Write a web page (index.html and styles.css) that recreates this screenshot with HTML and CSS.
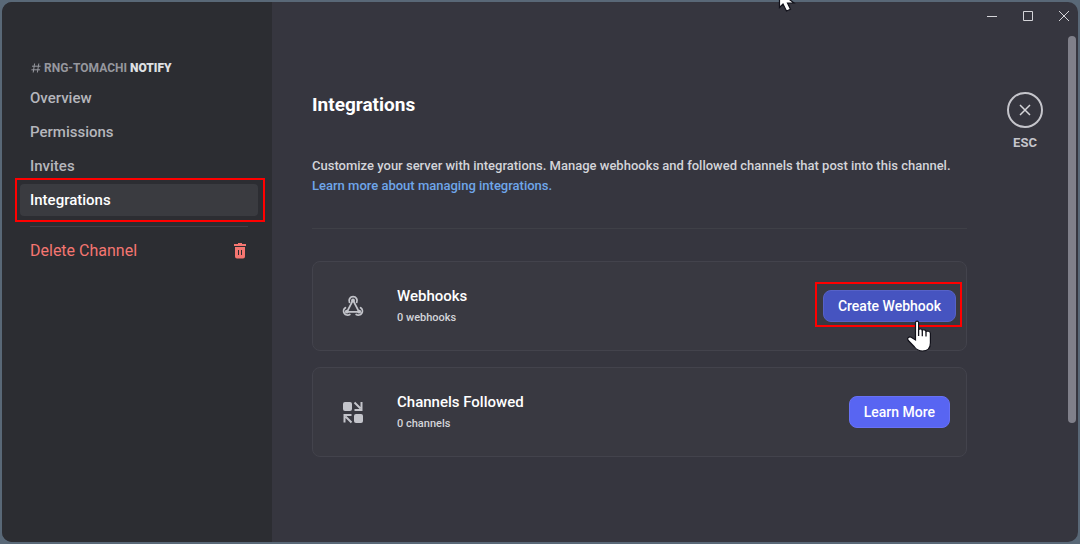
FILE: index.html
```html
<!DOCTYPE html>
<html lang="en">
<head>
<meta charset="utf-8">
<meta name="viewport" content="width=device-width, initial-scale=1">
<title>Integrations</title>
<link rel="stylesheet" href="styles.css">
</head>
<body>
<div class="window">
  <aside class="sidebar">
    <h2 class="channel">
      <svg class="hash" viewBox="0 0 10 10" width="10" height="10" aria-hidden="true"><path d="M3.6 0.5 2.2 9.5M7.8 0.5 6.4 9.5M1 3.2h8.6M0.4 6.8H9"/></svg>
      <span>RNG-TOMACHI <b>NOTIFY</b></span>
    </h2>
    <nav class="nav">
      <a class="nav-item" href="#overview">Overview</a>
      <a class="nav-item" href="#permissions">Permissions</a>
      <a class="nav-item" href="#invites">Invites</a>
      <a class="nav-item active marked" href="#integrations" aria-current="page">Integrations</a>
    </nav>
    <hr class="nav-rule">
    <button class="nav-item delete" type="button">Delete Channel
      <svg viewBox="0 0 12 16" width="12" height="16" aria-hidden="true"><path d="M4 0h4v1h4v2H0V1h4zM1 4h10v9.500a2 2 0 0 1-2 2H3a2 2 0 0 1-2-2zM4 7v5h1V7zM7 7v5h1V7z" fill="currentColor" fill-rule="evenodd"/></svg>
    </button>
  </aside>
  <div class="main">
    <div class="titlebar">
      <button type="button" aria-label="Minimize"><svg viewBox="0 0 12 12" width="12" height="12"><path d="M1 6.500h10"/></svg></button>
      <button type="button" aria-label="Maximize"><svg viewBox="0 0 12 12" width="12" height="12"><path d="M1.500 1.500h9v9h-9z"/></svg></button>
      <button type="button" aria-label="Close window"><svg viewBox="0 0 12 12" width="12" height="12"><path d="M1 1l10 10M11 1 1 11"/></svg></button>
    </div>
    <div class="body">
      <main class="content">
        <h1>Integrations</h1>
        <p class="intro">Customize your server with integrations. Manage webhooks and followed channels that post into this channel.</p>
        <a class="intro-link" href="#learn">Learn more about managing integrations.</a>
        <hr class="rule">
        <section class="card card-tight">
          <svg class="card-icon" viewBox="0 0 24 24" width="24" height="24" aria-hidden="true">
            <g fill="none" stroke="currentColor" stroke-width="1.800" stroke-linecap="round" stroke-linejoin="round">
              <path d="M8.500 8.300A4 4 0 1 1 15.700 8.300M12 6.200 6 17.800M4.400 13.700A4 4 0 1 0 8.800 20.400M6 17.800h12M12 6.200l6 11.600M19.600 13.700A4 4 0 1 1 15.200 20.400"/>
            </g>
            <g fill="currentColor"><circle cx="12" cy="6.400" r="1.900"/><circle cx="5.800" cy="17.700" r="1.900"/><circle cx="18.200" cy="17.700" r="1.900"/></g>
          </svg>
          <div class="card-text"><h2>Webhooks</h2><p>0 webhooks</p></div>
          <button class="btn hovered marked" type="button">Create Webhook
            <svg class="hand" viewBox="0 0 25 32" width="25" height="32" aria-hidden="true"><path d="M8.500 2.500C8.500 0.600 11.600 0.600 11.600 2.500V9.500C12.500 8.400 15 8.600 15.300 10.300 16.400 9.300 18.700 9.800 19 11.500 20.500 10.600 23.200 11.200 23.400 13.400V23C23.400 28 20.500 31 15.500 31 11.500 31 9.500 29.500 7.500 27L1.300 20.500C-.5 18 2 16.300 4.200 17.200L8.500 20z" fill="#fff" stroke="#11111a" stroke-width="1.200"/><path d="M11.600 9v7M15.300 10.300v6M19 11.500v5" stroke="#11111a" stroke-width="1.300"/></svg>
          </button>
        </section>
        <section class="card">
          <svg class="card-icon" viewBox="0 0 24 24" width="24" height="24" aria-hidden="true">
            <g fill="currentColor"><rect x="2" y="2" width="9" height="9" rx="2"/><rect x="13" y="14" width="9" height="9" rx="2"/></g>
            <path d="M13.500 2.500 19.500 8.500M20.500 2v8h-7M10.500 22.500 4.500 16.500M3.500 22.500v-7.500h7" fill="none" stroke="currentColor" stroke-width="2"/>
          </svg>
          <div class="card-text"><h2>Channels Followed</h2><p>0 channels</p></div>
          <button class="btn" type="button">Learn More</button>
        </section>
      </main>
      <div class="escape">
        <button type="button" aria-labelledby="esc"><svg viewBox="0 0 12 12" width="12" height="12"><path d="M1 1l10 10M11 1 1 11"/></svg></button>
        <span id="esc">ESC</span>
      </div>
    </div>
  </div>
  <div class="scroll"><div class="thumb"></div></div>
</div>
<svg class="pointer" viewBox="0 0 18 12" width="18" height="12" aria-hidden="true"><path d="M1.500-8V7.500L5 4l3.500 7 4-1.800L9.500 3H16z" fill="#fff" stroke="#11111a" stroke-width="1.200"/></svg>
</body>
</html>
```
FILE: styles.css
```css
* { box-sizing: border-box; }
body {
  margin: 0;
  min-height: 100vh;
  display: flex;
  padding: 2px;
  background: #596877;
  color: #d3d4d9;
  font: 400 14px/20px Roboto, sans-serif;
}
h1, h2, p { margin: 0; }
button { font: inherit; color: inherit; border: 0; padding: 0; background: none; }
a { text-decoration: none; }
.window {
  flex: 1;
  display: flex;
  overflow: hidden;
  background: #36363f;
  border-radius: 10px;
}
.sidebar {
  flex: 0 0 270px;
  padding: 56px 14px 0 18px;
  background: #2c2d32;
}
.channel {
  display: flex;
  align-items: center;
  gap: 3px;
  height: 20px;
  margin: 0 0 4px 11px;
  font-size: 12px;
  font-weight: 700;
  color: #96979e;
}
.channel b { color: #dfe0e3; }
.hash { fill: none; stroke: currentColor; }
.nav { display: flex; flex-direction: column; gap: 2px; }
.nav-item {
  position: relative;
  display: flex;
  align-items: center;
  justify-content: space-between;
  width: 100%;
  height: 32px;
  padding: 0 12px 0 10px;
  border-radius: 4px;
  color: #b5b6bc;
  font-size: 15px;
  font-weight: 500;
}
.active { background: #3a3b40; color: #fff; }
.marked { position: relative; }
.marked::after { content: ""; position: absolute; border: 2px solid #f00; }
.active.marked::after { inset: -6px -7px -6px -5px; }
.nav-rule, .rule { height: 1px; border: 0; background: #3f4047; }
.nav-rule { margin: 10px; margin-bottom: 8px; }
.delete { color: #f57671; font-size: 16px; font-weight: 400; }
.main { flex: 1; min-width: 0; }
.titlebar {
  display: flex;
  justify-content: flex-end;
  gap: 24px;
  padding: 8px 0;
  margin-right: -2px;
}
.titlebar button { height: 12px; width: 12px; }
svg { display: block; }
.titlebar svg, .escape svg { fill: none; stroke: #d5d5d9; }
.body { display: flex; gap: 40px; padding: 62px 25px 0 40px; }
.content { flex: 1; min-width: 0; }
h1 { font-size: 19px; line-height: 26px; font-weight: 700; color: #fff; }
.intro { margin-top: 38px; }
.intro, .intro-link { font-size: 13px; font-weight: 500; }
.intro-link { display: block; color: #6fa6ea; }
.rule { margin: 32px 0; }
.card {
  display: flex;
  align-items: center;
  height: 90px;
  padding: 0 16px 0 28px;
  border: 1px solid #43434c;
  border-radius: 8px;
  background: #393941;
}
.card + .card { margin-top: 16px; }
.card-tight { padding-right: 10px; }
.card-icon { color: #c3c4ca; }
.card-text { flex: 1; margin-left: 32px; }
.card-text h2 { font-size: 15px; line-height: 20px; font-weight: 500; color: #fff; }
.card-text p { margin-top: 4px; font-size: 11px; line-height: 16px; font-weight: 500; }
.btn {
  height: 32px;
  padding: 0 14px;
  border: 1px solid #6871f4;
  border-radius: 8px;
  background: #5865f2;
  color: #fff;
  font-size: 14px;
  font-weight: 500;
}
.hovered { background: #4654c0; border-color: #5762c7; }
.hovered.marked::after { inset: -9px -7px -6px -9px; }
.hand { position: absolute; z-index: 1; right: 23px; bottom: -31px; }
.escape { display: flex; flex-direction: column; align-items: center; gap: 5px; width: 36px; font-size: 13px; font-weight: 700; color: #c5c5cb; }
.escape button {
  display: grid;
  place-items: center;
  width: 36px;
  height: 36px;
  border: 2px solid #c5c5cb;
  border-radius: 50%;
}
.escape svg { stroke-width: 1.5; }
.scroll { display: flex; padding: 34px 2px 119px 0; }
.thumb { width: 8px; border-radius: 4px; background: #80808a; }
.pointer { position: absolute; left: 778px; top: 0; }
```
